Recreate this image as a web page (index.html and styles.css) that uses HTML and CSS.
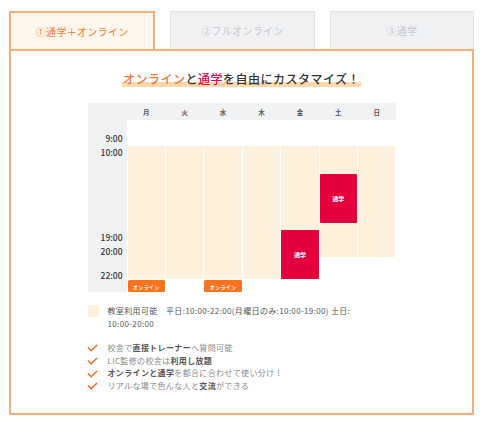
FILE: index.html
```html
<!DOCTYPE html>
<html lang="ja">
<head>
<meta charset="utf-8">
<link rel="stylesheet" href="styles.css">
</head>
<body>
<div class="wrap">
  <div class="tabs">
    <div class="tab active">①通学＋オンライン</div>
    <div class="tab">②フルオンライン</div>
    <div class="tab">③通学</div>
  </div>
  <div class="panel">
    <h2 class="title"><span class="hl"><span class="c-online">オンライン</span>と<span class="c-school">通学</span>を自由にカスタマイズ！</span></h2>

    <div class="cal">
      <div class="cal-head">
        <div></div>
        <div>月</div><div>火</div><div>水</div><div>木</div><div>金</div><div>土</div><div>日</div>
      </div>
      <div class="cal-body">
        <div class="times">
          <span class="time" style="top:12px">9:00</span>
          <span class="time" style="top:26px">10:00</span>
          <span class="time" style="top:111px">19:00</span>
          <span class="time" style="top:125px">20:00</span>
          <span class="time" style="top:149px">22:00</span>
        </div>
        <div class="day">
          <div class="open weekday"></div>
          <div class="online">オンライン</div>
        </div>
        <div class="day">
          <div class="open weekday"></div>
        </div>
        <div class="day">
          <div class="open weekday"></div>
          <div class="online">オンライン</div>
        </div>
        <div class="day">
          <div class="open weekday"></div>
        </div>
        <div class="day">
          <div class="open weekday">
            <div class="event" style="top:84px;height:49px">通学</div>
          </div>
        </div>
        <div class="day">
          <div class="open weekend">
            <div class="event" style="top:28px;height:49px">通学</div>
          </div>
        </div>
        <div class="day">
          <div class="open weekend"></div>
        </div>
      </div>
    </div>

    <div class="legend">
      <span class="swatch"></span>
      <p class="legend-text">教室利用可能　平日:10:00-22:00(月曜日のみ:10:00-19:00) 土日: <span class="nw">10:00-20:00</span></p>
    </div>

    <ul class="checks">
      <li><svg class="chk" viewBox="0 0 11 8"><polyline points="1,3.5 4.2,6.8 10,1"/></svg><span>校舎で<b>直接トレーナー</b>へ質問可能</span></li>
      <li><svg class="chk" viewBox="0 0 11 8"><polyline points="1,3.5 4.2,6.8 10,1"/></svg><span>LIC監修の校舎は<b>利用し放題</b></span></li>
      <li><svg class="chk" viewBox="0 0 11 8"><polyline points="1,3.5 4.2,6.8 10,1"/></svg><span><b>オンラインと通学</b>を都合に合わせて使い分け！</span></li>
      <li><svg class="chk" viewBox="0 0 11 8"><polyline points="1,3.5 4.2,6.8 10,1"/></svg><span>リアルな場で色んな人と<b>交流</b>ができる</span></li>
    </ul>
  </div>
</div>
</body>
</html>
```

FILE: styles.css
```css
* { box-sizing: border-box; }
html, body { margin: 0; padding: 0; background: #fff; }
body {
  font-family: "Noto Sans CJK JP", "Noto Sans", sans-serif;
  color: #333;
}
.wrap {
  width: 474px;
  padding: 11px 0 0 9px;
}
.tabs {
  display: flex;
  gap: 15px;
}
.tab {
  flex: 1;
  height: 38px;
  display: flex;
  align-items: center;
  justify-content: center;
  font-size: 10px;
  letter-spacing: 0.3px;
  color: #c5c6c9;
  background: #f0f1f3;
  border: 1px solid #e2e3e5;
  border-bottom: none;
}
.tab.active {
  background: #fff7ee;
  border: 2px solid #f9ae7a;
  border-bottom: none;
  color: #f47a37;
}
.panel {
  border: 2px solid #f9ae7a;
  height: 366px;
  padding: 20px 0 0;
}
.title {
  margin: 0;
  text-align: center;
  font-size: 12px;
  font-weight: 500;
  line-height: 16px;
  letter-spacing: 0.5px;
  color: #333;
}
.hl {
  display: inline-block;
  padding: 0 1px;
  background: linear-gradient(to bottom, transparent 11px, #fdd8a8 11px);
}
.c-online { color: #f4753a; }
.c-school { color: #e6004b; }

.cal {
  width: 308px;
  margin: 16px auto 0;
}
.cal-head {
  display: grid;
  grid-template-columns: 39px repeat(7, 1fr);
  column-gap: 1px;
  height: 17px;
  background: #f1f2f4;
  align-items: center;
  text-align: center;
  font-size: 6.5px;
  font-weight: 700;
  color: #555;
}
.cal-body {
  display: grid;
  grid-template-columns: 39px repeat(7, 1fr);
  column-gap: 1px;
  height: 172px;
}
.times {
  position: relative;
  background: #f0f1f3;
}
.time {
  position: absolute;
  right: 4px;
  font-size: 8.5px;
  line-height: 12px;
  font-weight: 500;
  color: #333;
}
.day {
  padding-top: 26px;
  display: flex;
  flex-direction: column;
}
.open {
  position: relative;
  background: #fdf0dd;
}
.open.weekday { height: 133px; }
.open.weekend { height: 111px; }
.event {
  position: absolute;
  left: 0;
  right: 0;
  background: #e4003b;
  border-radius: 1px;
  color: #fff;
  font-size: 6px;
  font-weight: 700;
  display: flex;
  align-items: center;
  justify-content: center;
}
.online {
  margin-top: 1px;
  height: 12px;
  background: #f7731f;
  border-radius: 1.5px;
  color: #fff;
  font-size: 5px;
  font-weight: 700;
  display: flex;
  align-items: center;
  justify-content: center;
  letter-spacing: 0.3px;
}

.legend {
  width: 308px;
  margin: 12px auto 0;
  display: flex;
  align-items: flex-start;
}
.swatch {
  flex: none;
  width: 11px;
  height: 12px;
  margin-top: 1px;
  background: #fdf0dd;
}
.legend-text {
  margin: 0 0 0 9px;
  width: 285px;
  font-size: 8px;
  line-height: 13px;
  letter-spacing: 0.35px;
  color: #555;
}
.nw { white-space: nowrap; }
.checks {
  list-style: none;
  width: 308px;
  margin: 12px auto 0;
  padding: 0;
  font-size: 8px;
  line-height: 12.7px;
  letter-spacing: 0.35px;
  color: #8a8a8a;
}
.checks li {
  display: flex;
  align-items: center;
}
.chk {
  width: 11px;
  height: 8px;
  margin: 0 10px 0 -1px;
  fill: none;
  stroke: #f26b1d;
  stroke-width: 1.5;
}
.checks b {
  font-weight: 700;
  color: #555;
}
```
